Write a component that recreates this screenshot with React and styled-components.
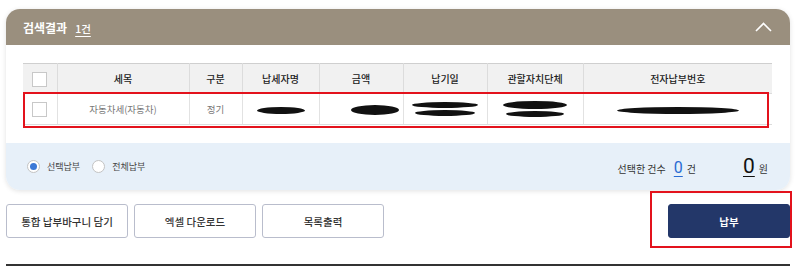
import React from "react";
import styled, { createGlobalStyle } from "styled-components";

const Global = createGlobalStyle`
  html, body { margin: 0; padding: 0; background: #fff; }
  body { font-family: "Noto Sans CJK KR", "Noto Sans", sans-serif; color: #333; }
  * { box-sizing: border-box; }
`;

const Page = styled.div`
  width: 800px;
  height: 273px;
  padding: 9px 10px 0 6px;
`;

const Card = styled.section`
  border-radius: 14px;
  background: #fff;
  box-shadow: 0 1px 5px rgba(0, 0, 0, 0.12);
  overflow: hidden;
`;

const CardHeader = styled.header`
  height: 36px;
  background: #9a8f7e;
  display: flex;
  align-items: center;
  justify-content: space-between;
  padding: 0 18px 0 17px;
`;

const Title = styled.h2`
  margin: 0;
  font-size: 12px;
  font-weight: 700;
  color: #fff;
  display: flex;
  align-items: baseline;
  gap: 8px;
`;

const Count = styled.span`
  font-size: 10.5px;
  font-weight: 500;
  text-decoration: underline;
  text-underline-offset: 3px;
`;

const CardBody = styled.div`
  padding: 18px 18px 18px 17px;
`;

const TableWrap = styled.div`
  position: relative;
`;

const Table = styled.table`
  width: 749px;
  border-collapse: collapse;
  table-layout: fixed;
  border-top: 1px solid #cfcfcf;
`;

const Th = styled.th`
  height: 30px;
  background: #f1f1f1;
  font-size: 10px;
  font-weight: 500;
  color: #222;
  border-left: 1px solid #dcdcdc;
  border-bottom: 1px solid #dcdcdc;
  &:first-child { border-left: none; }
`;

const Td = styled.td`
  height: 31px;
  text-align: center;
  font-size: 9.5px;
  color: #777;
  border-left: 1px solid #e2e2e2;
  border-bottom: 1px solid #dcdcdc;
  &:first-child { border-left: none; }
`;

const Check = styled.span`
  display: inline-block;
  width: 15px;
  height: 15px;
  border: 1px solid #c8c8c8;
  background: #fff;
  vertical-align: middle;
`;

const Blob = styled.span`
  display: inline-block;
  width: ${(p) => p.$w}px;
  height: ${(p) => p.$h}px;
  background: #111;
  border-radius: 50%;
  filter: blur(0.7px);
  vertical-align: middle;
  margin: 1px 0;
`;

const BlobStack = styled.span`
  display: inline-flex;
  flex-direction: column;
  align-items: center;
  vertical-align: middle;
`;

const RowMark = styled.div`
  position: absolute;
  left: 0;
  top: 29px;
  width: 746px;
  height: 36px;
  border: 2px solid #e3121c;
  pointer-events: none;
`;

const Summary = styled.div`
  height: 47px;
  background: #e7f0f9;
  display: flex;
  align-items: center;
  justify-content: space-between;
  padding: 0 22px 0 21px;
`;

const Radios = styled.div`
  display: flex;
  align-items: center;
  gap: 12px;
`;

const RadioLabel = styled.label`
  display: flex;
  align-items: center;
  gap: 7px;
  font-size: 9px;
  color: #444;
`;

const RadioDot = styled.span`
  width: 13px;
  height: 13px;
  border-radius: 50%;
  border: 1px solid #c3c3c3;
  background: #fff;
  display: flex;
  align-items: center;
  justify-content: center;
  &::after {
    content: "";
    width: 7px;
    height: 7px;
    border-radius: 50%;
    background: ${(p) => (p.$on ? "#3b78d6" : "transparent")};
  }
`;

const Totals = styled.div`
  display: flex;
  align-items: baseline;
  font-size: 10px;
  color: #333;
`;

const Num = styled.span`
  font-family: "Roboto", "Liberation Sans", sans-serif;
  font-size: ${(p) => p.$size}px;
  color: ${(p) => p.$color};
  text-decoration: underline;
  text-decoration-thickness: 1px;
  text-underline-offset: 3px;
  margin: 0 4px 0 ${(p) => p.$ml}px;
  line-height: 1;
`;

const Actions = styled.div`
  display: flex;
  justify-content: space-between;
  align-items: center;
  margin-top: 14px;
`;

const Group = styled.div`
  display: flex;
  gap: 6px;
`;

const Btn = styled.button`
  width: 122px;
  height: 34px;
  border-radius: 3px;
  font-family: inherit;
  font-size: 10.5px;
  border: 1px solid ${(p) => (p.$primary ? "#233769" : "#b9bdcc")};
  background: ${(p) => (p.$primary ? "#233769" : "#fff")};
  color: ${(p) => (p.$primary ? "#fff" : "#333")};
  font-weight: ${(p) => (p.$primary ? 700 : 500)};
  cursor: pointer;
`;

const PayWrap = styled.div`
  position: relative;
`;

const PayMark = styled.div`
  position: absolute;
  left: -18px;
  top: -13px;
  width: 142px;
  height: 57px;
  border: 2px solid #e3121c;
  pointer-events: none;
`;

const Rule = styled.hr`
  margin: 26px 0 0;
  border: none;
  border-top: 2px solid #333;
`;

const headers = ["세목", "구분", "납세자명", "금액", "납기일", "관할자치단체", "전자납부번호"];
const widths = [34, 132, 53, 77, 84, 84, 96, 189];

export default function App() {
  return (
    <>
      <Global />
      <Page>
        <Card>
          <CardHeader>
            <Title>
              검색결과 <Count>1건</Count>
            </Title>
            <svg width="17" height="10" viewBox="0 0 17 10" fill="none">
              <path d="M1 9 L8.5 1.5 L16 9" stroke="#fff" strokeWidth="1.6" />
            </svg>
          </CardHeader>
          <CardBody>
            <TableWrap>
              <Table>
                <colgroup>
                  {widths.map((w, i) => (
                    <col key={i} style={{ width: w }} />
                  ))}
                </colgroup>
                <thead>
                  <tr>
                    <Th>
                      <Check />
                    </Th>
                    {headers.map((h) => (
                      <Th key={h}>{h}</Th>
                    ))}
                  </tr>
                </thead>
                <tbody>
                  <tr>
                    <Td>
                      <Check />
                    </Td>
                    <Td>자동차세(자동차)</Td>
                    <Td>정기</Td>
                    <Td>
                      <Blob $w={48} $h={7} />
                    </Td>
                    <Td style={{ textAlign: "right", paddingRight: 4 }}>
                      <Blob $w={48} $h={10} />
                    </Td>
                    <Td>
                      <BlobStack>
                        <Blob $w={66} $h={6} />
                        <Blob $w={60} $h={6} />
                      </BlobStack>
                    </Td>
                    <Td>
                      <BlobStack>
                        <Blob $w={64} $h={8} />
                        <Blob $w={58} $h={6} />
                      </BlobStack>
                    </Td>
                    <Td>
                      <Blob $w={122} $h={7} />
                    </Td>
                  </tr>
                </tbody>
              </Table>
              <RowMark />
            </TableWrap>
          </CardBody>
          <Summary>
            <Radios>
              <RadioLabel>
                <RadioDot $on />
                선택납부
              </RadioLabel>
              <RadioLabel>
                <RadioDot />
                전체납부
              </RadioLabel>
            </Radios>
            <Totals>
              선택한 건수
              <Num $size={16} $color="#2a6cd3" $ml={8}>0</Num>
              건
              <Num $size={21} $color="#111" $ml={47}>0</Num>
              원
            </Totals>
          </Summary>
        </Card>
        <Actions>
          <Group>
            <Btn>통합 납부바구니 담기</Btn>
            <Btn>엑셀 다운로드</Btn>
            <Btn>목록출력</Btn>
          </Group>
          <PayWrap>
            <Btn $primary>납부</Btn>
            <PayMark />
          </PayWrap>
        </Actions>
        <Rule />
      </Page>
    </>
  );
}
